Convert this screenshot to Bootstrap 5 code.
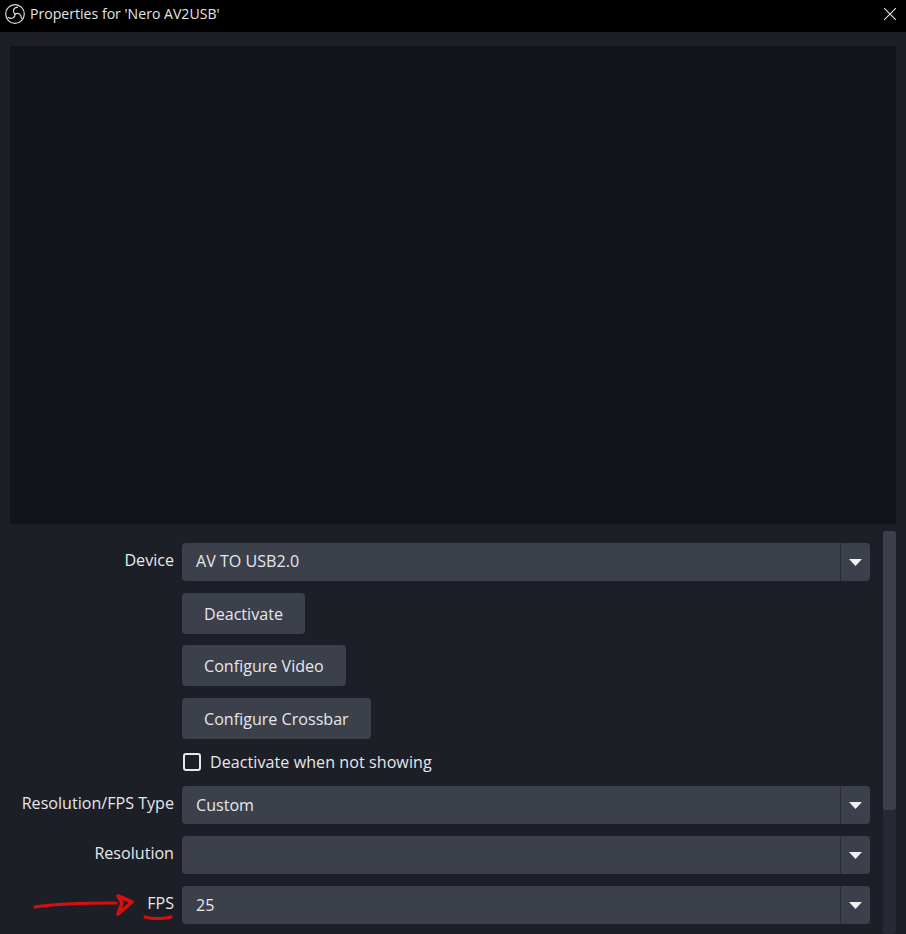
<!DOCTYPE html>
<html lang="en">
<head>
    <meta charset="UTF-8">
    <meta name="viewport" content="width=device-width, initial-scale=1.0">
    <title>Properties for 'Nero AV2USB'</title>
    <link href="https://cdn.jsdelivr.net/npm/bootstrap@5.3.0/dist/css/bootstrap.min.css" rel="stylesheet">
    <style>
        html, body { height: 100%; }
        body {
            background: #1d1f27;
            color: #e6e7ea;
            font-family: "Open Sans", "Liberation Sans", sans-serif;
            font-size: 16.1px;
            overflow: hidden;
        }
        /* title bar */
        .title-strip { height: 32px; background: #000; color: #e4e4e4; font-size: 14.1px; padding: 0 10px 5px 5px; }
        .title-strip svg { flex: none; }
        .title-text { margin-left: 5px; }
        /* preview */
        .preview-area { height: 478px; margin: 14px 10px 0; background: #13141a; }
        /* properties */
        .props-area { height: 410px; margin-left: 10px; margin-right: 10px; padding-top: 7px; }
        .props-list { width: 860px; padding-top: 12px; }
        .prop-row { display: flex; align-items: flex-start; }
        .gap-big { margin-bottom: 12px; }
        .gap-small { margin-bottom: 11px; }
        .prop-label { width: 164px; flex: none; text-align: right; margin-right: 8px; line-height: 34px; white-space: nowrap; position: relative; }
        .prop-field { flex: 1; min-width: 0; }
        .obs-select { height: 38px; background: #3c404b; border-radius: 4px; display: flex; align-items: center; }
        .obs-select-text { flex: 1; padding-left: 14px; padding-bottom: 1px; }
        .obs-select-arrow { width: 30px; height: 100%; border-left: 1px solid #2b2e37; padding-right: 1px; display: flex; align-items: center; justify-content: center; }
        .obs-btn { background: #3c404b; color: #e6e7ea; border: 0; border-radius: 4px; height: 41px; padding: 1px 22px 0; font-size: 16.1px; display: block; }
        .obs-check { width: 18px; height: 18px; border: 2px solid #e6e7ea; border-radius: 3px; flex: none; margin-left: 1px; margin-right: 9px; }
        .check-text { letter-spacing: .05px; }
        .scroll-track { width: 13px; background: #262932; border-radius: 3px; }
        .scroll-thumb { height: 279px; background: #3c404b; border-radius: 3px; }
        .red-arrow { position: absolute; left: 20px; top: 4px; }
    </style>
</head>
<body>
    <!-- Title bar -->
    <div class="title-strip d-flex align-items-center">
        <svg width="20" height="20" viewBox="0 0 20 20" fill="none" stroke="#dcdcdc" stroke-width="1.2" stroke-linecap="round">
            <circle cx="10" cy="10" r="9.3"/>
            <path d="M10 10C7.5 8 7.8 3.8 12.6 3.2"/>
            <path d="M10 10C12.8 8.6 16.6 10.2 16.4 14.2"/>
            <path d="M10 10C10.3 13.2 7 15.8 3.4 13.6"/>
        </svg>
        <span class="title-text flex-grow-1">Properties for 'Nero AV2USB'</span>
        <svg width="12" height="12" viewBox="0 0 12 12" stroke="#e4e4e4" stroke-width="1.1"><path d="M0 0l12 12M12 0L0 12"/></svg>
    </div>

    <!-- Preview -->
    <div class="preview-area"></div>

    <!-- Properties -->
    <div class="props-area d-flex">
        <div class="props-list">
            <div class="prop-row gap-big">
                <div class="prop-label">Device</div>
                <div class="prop-field">
                    <div class="obs-select">
                        <div class="obs-select-text">AV TO USB2.0</div>
                        <div class="obs-select-arrow"><svg width="13" height="7" viewBox="0 0 13 7"><path d="M0 0h13L6.5 7z" fill="#f0f0f0"/></svg></div>
                    </div>
                </div>
            </div>
            <div class="prop-row gap-small">
                <div class="prop-label"></div>
                <div class="prop-field"><button class="obs-btn">Deactivate</button></div>
            </div>
            <div class="prop-row gap-big">
                <div class="prop-label"></div>
                <div class="prop-field"><button class="obs-btn">Configure Video</button></div>
            </div>
            <div class="prop-row gap-small">
                <div class="prop-label"></div>
                <div class="prop-field"><button class="obs-btn">Configure Crossbar</button></div>
            </div>
            <div class="prop-row gap-big">
                <div class="prop-label"></div>
                <div class="prop-field d-flex align-items-center">
                    <span class="obs-check"></span>
                    <span class="check-text">Deactivate when not showing</span>
                </div>
            </div>
            <div class="prop-row gap-big">
                <div class="prop-label">Resolution/FPS Type</div>
                <div class="prop-field">
                    <div class="obs-select">
                        <div class="obs-select-text">Custom</div>
                        <div class="obs-select-arrow"><svg width="13" height="7" viewBox="0 0 13 7"><path d="M0 0h13L6.5 7z" fill="#f0f0f0"/></svg></div>
                    </div>
                </div>
            </div>
            <div class="prop-row gap-big">
                <div class="prop-label">Resolution</div>
                <div class="prop-field">
                    <div class="obs-select">
                        <div class="obs-select-text">&nbsp;</div>
                        <div class="obs-select-arrow"><svg width="13" height="7" viewBox="0 0 13 7"><path d="M0 0h13L6.5 7z" fill="#f0f0f0"/></svg></div>
                    </div>
                </div>
            </div>
            <div class="prop-row">
                <div class="prop-label">FPS
                    <svg class="red-arrow" width="146" height="30" viewBox="0 0 146 30" fill="none" stroke="#d90f0f" stroke-linecap="round" stroke-linejoin="round">
                        <path d="M5 17C30 13 60 13 86 13" stroke-width="3"/>
                        <path d="M88 6L102 12L88 24L92 13Z" stroke-width="3.6"/>
                        <path d="M115 27C122 29 132 29 141 27" stroke-width="3"/>
                    </svg>
                </div>
                <div class="prop-field">
                    <div class="obs-select">
                        <div class="obs-select-text">25</div>
                        <div class="obs-select-arrow"><svg width="13" height="7" viewBox="0 0 13 7"><path d="M0 0h13L6.5 7z" fill="#f0f0f0"/></svg></div>
                    </div>
                </div>
            </div>
        </div>
        <div class="scroll-track ms-auto"><div class="scroll-thumb"></div></div>
    </div>

    <script src="https://cdn.jsdelivr.net/npm/bootstrap@5.3.0/dist/js/bootstrap.bundle.min.js"></script>
</body>
</html>
